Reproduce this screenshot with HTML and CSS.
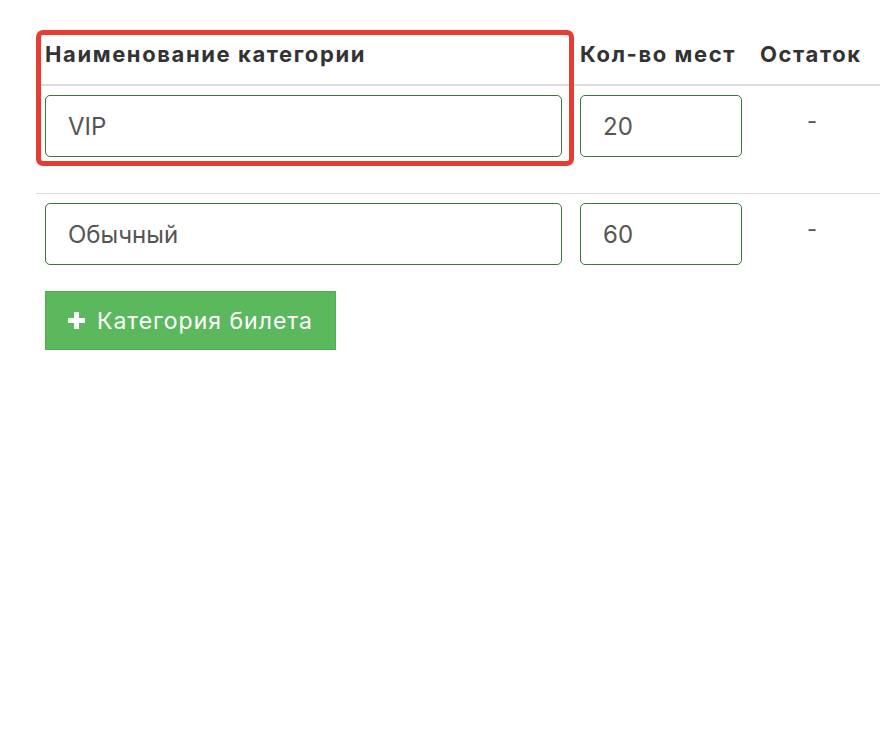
FILE: index.html
```html
<!DOCTYPE html>
<html lang="ru">
<head>
<meta charset="utf-8">
<title>Категории билетов</title>
<link rel="stylesheet" href="styles.css">
</head>
<body>
<div class="page">
  <div class="wrap">
    <table class="tickets">
      <thead>
        <tr>
          <th class="c-name">Наименование категории</th>
          <th class="c-qty">Кол-во мест</th>
          <th class="c-rest">Остаток</th>
          <th class="c-extra"></th>
        </tr>
      </thead>
      <tbody>
        <tr class="first">
          <td class="c-name"><input class="field" type="text" value="VIP"></td>
          <td class="c-qty"><input class="field" type="text" value="20"></td>
          <td class="c-rest"><span class="dash">-</span></td>
          <td class="c-extra"></td>
        </tr>
        <tr class="last">
          <td class="c-name"><input class="field" type="text" value="Обычный"></td>
          <td class="c-qty"><input class="field" type="text" value="60"></td>
          <td class="c-rest"><span class="dash">-</span></td>
          <td class="c-extra"></td>
        </tr>
      </tbody>
    </table>
    <div class="highlight"></div>
    <button class="add-btn" type="button">
      <svg class="plus" width="17" height="17" viewBox="0 0 17 17" aria-hidden="true"><path d="M6 0h5v6h6v5h-6v6H6v-6H0V6h6z" fill="#fff"/></svg>
      <span>Категория билета</span>
    </button>
  </div>
</div>
</body>
</html>
```
FILE: styles.css
```css
html, body {
  margin: 0;
  padding: 0;
  background: #fff;
}
body {
  font-family: Inter, "Noto Sans", "DejaVu Sans", sans-serif;
  color: #333;
}
.page {
  padding: 30px 0 0 36px;
  overflow: hidden;
}
.wrap {
  position: relative;
}
.tickets {
  border-collapse: collapse;
  width: 900px;
  table-layout: fixed;
}
.c-name { width: 517px; }
.c-qty { width: 162px; }
.c-rest { width: 104px; }
.tickets th {
  text-align: left;
  font-size: 22px;
  font-weight: 700;
  line-height: 30px;
  padding: 9px 9px 15px;
  border-bottom: 2px solid #ddd;
  white-space: nowrap;
  letter-spacing: 1.6px;
}
.tickets td {
  padding: 9px;
  vertical-align: top;
}
.tickets tr.first td {
  padding-bottom: 36px;
  border-bottom: 1px solid #ddd;
}
.tickets td.c-rest {
  text-align: center;
}
.dash {
  display: block;
  font-size: 22px;
  line-height: 30px;
  padding-top: 11px;
  color: #555;
}
.field {
  display: block;
  box-sizing: border-box;
  width: 100%;
  height: 62px;
  margin: 0;
  padding: 0 22px;
  border: 1px solid #3c763d;
  border-radius: 5px;
  font-family: Inter, "Noto Sans", "DejaVu Sans", sans-serif;
  font-size: 24px;
  color: #555;
  background: #fff;
  outline: none;
}
.highlight {
  position: absolute;
  left: 0;
  top: 0;
  width: 538px;
  height: 136px;
  box-sizing: border-box;
  border: 5px solid #e63c32;
  border-radius: 7px;
  pointer-events: none;
}
.add-btn {
  display: flex;
  align-items: center;
  gap: 12px;
  margin: 17px 0 0 9px;
  width: 291px;
  height: 59px;
  box-sizing: border-box;
  padding: 0 0 0 22px;
  background: #5cb85c;
  border: 1px solid #4cae4c;
  border-radius: 0;
  color: #fff;
  font-family: Inter, "Noto Sans", "DejaVu Sans", sans-serif;
  font-size: 23px;
  letter-spacing: 1px;
  cursor: pointer;
}
.plus {
  flex: none;
}
```
